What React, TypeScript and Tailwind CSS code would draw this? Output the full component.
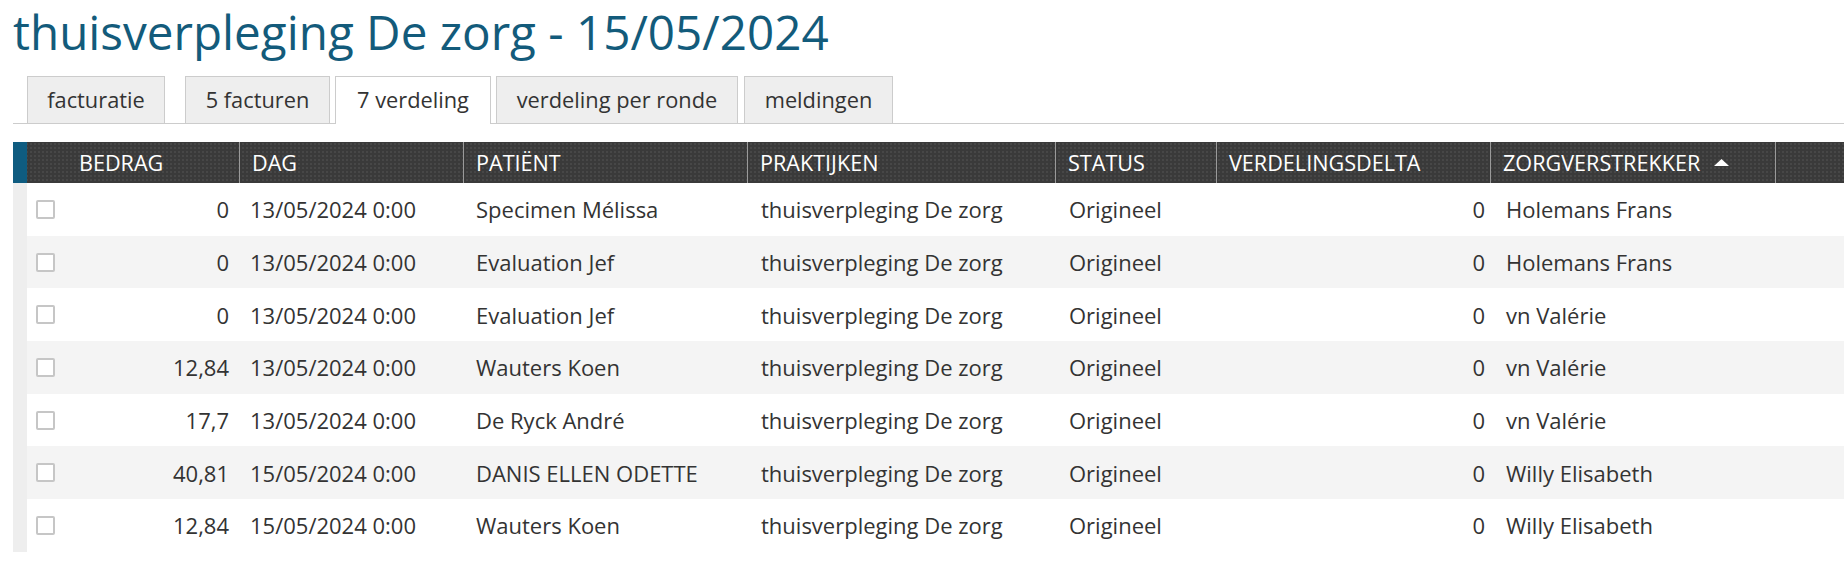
import type { ReactElement } from "react";

type Row = {
  bedrag: string;
  dag: string;
  patient: string;
  praktijk: string;
  status: string;
  delta: string;
  zorg: string;
};

const rows: Row[] = [
  { bedrag: "0", dag: "13/05/2024 0:00", patient: "Specimen Mélissa", praktijk: "thuisverpleging De zorg", status: "Origineel", delta: "0", zorg: "Holemans Frans" },
  { bedrag: "0", dag: "13/05/2024 0:00", patient: "Evaluation Jef", praktijk: "thuisverpleging De zorg", status: "Origineel", delta: "0", zorg: "Holemans Frans" },
  { bedrag: "0", dag: "13/05/2024 0:00", patient: "Evaluation Jef", praktijk: "thuisverpleging De zorg", status: "Origineel", delta: "0", zorg: "vn Valérie" },
  { bedrag: "12,84", dag: "13/05/2024 0:00", patient: "Wauters Koen", praktijk: "thuisverpleging De zorg", status: "Origineel", delta: "0", zorg: "vn Valérie" },
  { bedrag: "17,7", dag: "13/05/2024 0:00", patient: "De Ryck André", praktijk: "thuisverpleging De zorg", status: "Origineel", delta: "0", zorg: "vn Valérie" },
  { bedrag: "40,81", dag: "15/05/2024 0:00", patient: "DANIS ELLEN ODETTE", praktijk: "thuisverpleging De zorg", status: "Origineel", delta: "0", zorg: "Willy Elisabeth" },
  { bedrag: "12,84", dag: "15/05/2024 0:00", patient: "Wauters Koen", praktijk: "thuisverpleging De zorg", status: "Origineel", delta: "0", zorg: "Willy Elisabeth" },
];

// strip | checkbox | bedrag | dag | patiënt | praktijken | status | delta | zorgverstrekker | rest
const cols =
  "grid grid-cols-[14px_40px_172px_224px_284px_308px_161px_274px_285px_1fr]";

export default function App(): ReactElement {
  return (
    <div className="min-h-[584px] w-full bg-white pl-[13px] font-['Open_Sans',sans-serif] text-[#333333]">
      <Title />
      <Tabs />
      <Grid />
    </div>
  );
}

function Title(): ReactElement {
  return (
    <div className="h-[76px] pt-[8px]">
      <h1 className="text-[47.6px] font-normal leading-none text-[#135b7b]">
        thuisverpleging De zorg - 15/05/2024
      </h1>
    </div>
  );
}

function Tabs(): ReactElement {
  return (
    <div className="flex h-[48px] items-start border-b border-[#cccccc] pl-[14px] text-[21.8px]">
      <Tab label="facturatie" className="w-[138px]" />
      <Tab label="5 facturen" className="ml-[20px] w-[145px]" />
      <Tab label="7 verdeling" className="ml-[5px] w-[156px]" active />
      <Tab label="verdeling per ronde" className="ml-[5px] w-[242px]" />
      <Tab label="meldingen" className="ml-[6px] w-[149px]" />
    </div>
  );
}

function Tab({ label, className, active }: { label: string; className: string; active?: boolean }): ReactElement {
  return (
    <div
      className={`${className} flex items-center justify-center border border-b-0 border-[#cccccc] ${
        active ? "h-[48px] bg-white" : "h-[47px] bg-[#eeeeee]"
      }`}
    >
      {label}
    </div>
  );
}

function Grid(): ReactElement {
  return (
    <div className="mt-[18px]">
      <div className={`${cols} h-[41px] bg-[#3a3a3a] bg-[radial-gradient(#474747_1px,transparent_1px)] bg-[length:4px_4px] text-[21.6px] uppercase leading-none text-white`}>
        <div className="bg-[#0f5c80]" />
        <div className="col-span-2 flex items-center pl-[52px]">Bedrag</div>
        <HeadCell label="Dag" />
        <HeadCell label="Patiënt" />
        <HeadCell label="Praktijken" />
        <HeadCell label="Status" />
        <HeadCell label="Verdelingsdelta" />
        <HeadCell label="Zorgverstrekker" sorted />
        <div className="border-l border-[#9a9a9a]" />
      </div>
      {rows.map((r, i) => (
        <div
          key={i}
          className={`${cols} h-[52.7px] text-[22px] leading-none ${i % 2 === 1 ? "bg-[#f4f4f4]" : "bg-white"}`}
        >
          <div className="bg-[#eeeeee]" />
          <div className="flex items-center pl-[9px]">
            <div className="h-[19px] w-[19px] rounded-[2px] border-2 border-[#c6c6c6] bg-white" />
          </div>
          <div className="flex items-center justify-end pr-[10px]">{r.bedrag}</div>
          <div className="flex items-center pl-[11px]">{r.dag}</div>
          <div className="flex items-center pl-[13px]">{r.patient}</div>
          <div className="flex items-center pl-[14px]">{r.praktijk}</div>
          <div className="flex items-center pl-[14px]">{r.status}</div>
          <div className="flex items-center justify-end pr-[5px]">{r.delta}</div>
          <div className="flex items-center pl-[16px]">{r.zorg}</div>
          <div />
        </div>
      ))}
    </div>
  );
}

function HeadCell({ label, sorted }: { label: string; sorted?: boolean }): ReactElement {
  return (
    <div className="flex items-center border-l border-[#9a9a9a] pl-[12px]">
      <span>{label}</span>
      {sorted && (
        <svg width="15" height="7" viewBox="0 0 15 7" className="ml-[14px]" aria-hidden="true">
          <polygon points="0,7 7.5,0 15,7" fill="#ffffff" />
        </svg>
      )}
    </div>
  );
}
